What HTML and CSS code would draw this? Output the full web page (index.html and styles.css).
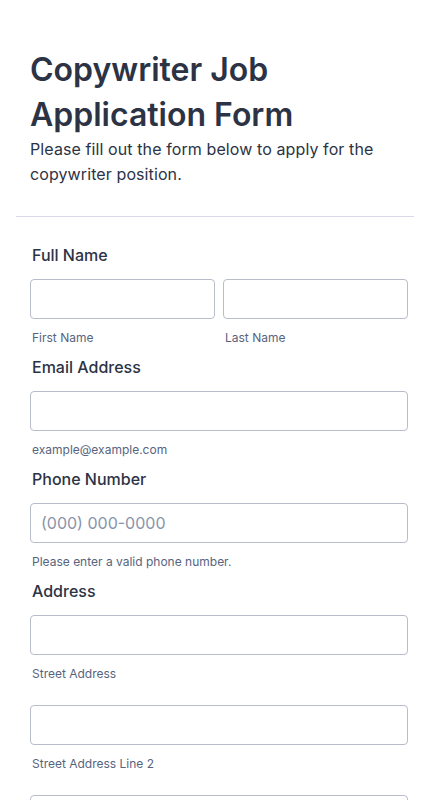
FILE: index.html
```html
<!DOCTYPE html>
<html lang="en">
<head>
  <meta charset="UTF-8" />
  <meta name="viewport" content="width=device-width, initial-scale=1.0" />
  <title>Copywriter Job Application Form</title>
  <link rel="stylesheet" href="styles.css">
</head>
<body>
  <form class="form-all">
    <div class="form-header">
      <h1 class="form-title">Copywriter Job Application Form</h1>
      <p class="form-subtitle">Please fill out the form below to apply for the copywriter position.</p>
    </div>

    <ul class="form-section">
      <li class="form-line">
        <label class="form-label">Full Name</label>
        <div class="name-row">
          <div class="sub-field">
            <input type="text" class="form-input" />
            <span class="sublabel">First Name</span>
          </div>
          <div class="sub-field">
            <input type="text" class="form-input" />
            <span class="sublabel">Last Name</span>
          </div>
        </div>
      </li>

      <li class="form-line">
        <label class="form-label">Email Address</label>
        <input type="email" class="form-input" />
        <span class="sublabel">example@example.com</span>
      </li>

      <li class="form-line">
        <label class="form-label">Phone Number</label>
        <input type="tel" class="form-input" placeholder="(000) 000-0000" />
        <span class="sublabel">Please enter a valid phone number.</span>
      </li>

      <li class="form-line">
        <label class="form-label">Address</label>
        <div class="address-part">
          <input type="text" class="form-input" />
          <span class="sublabel">Street Address</span>
        </div>
        <div class="address-part">
          <input type="text" class="form-input" />
          <span class="sublabel">Street Address Line 2</span>
        </div>
        <div class="address-part">
          <input type="text" class="form-input" />
          <span class="sublabel">City</span>
        </div>
      </li>
    </ul>
  </form>
</body>
</html>
```

FILE: styles.css
```css
body {
  margin: 0;
  background: #fff;
  color: #2c3345;
  font-family: Inter, "Noto Sans", sans-serif;
}
.form-all {
  margin: 0 16px;
}
.form-header {
  padding: 47px 14px 29px;
  border-bottom: 1px solid #d8dae9;
}
.form-title {
  margin: 0;
  font-size: 32px;
  line-height: 45px;
  font-weight: 600;
  color: #2c3345;
}
.form-subtitle {
  margin: 0;
  font-size: 16px;
  line-height: 25px;
  font-weight: 400;
  letter-spacing: 0.1px;
  color: #2c3345;
}
.form-section {
  list-style: none;
  margin: 0;
  padding: 28px 6px 0 14px;
}
.form-line {
  display: flex;
  flex-direction: column;
  margin-bottom: 11px;
}
.form-label {
  display: block;
  margin: 0 0 14px 2px;
  font-size: 16px;
  line-height: 20px;
  font-weight: 500;
  color: #2c3345;
}
.name-row {
  display: grid;
  grid-template-columns: 1fr 1fr;
  gap: 8px;
}
.sub-field {
  display: flex;
  flex-direction: column;
}
.form-input {
  box-sizing: border-box;
  width: 100%;
  height: 40px;
  margin: 0;
  padding: 0 10px;
  border: 1px solid #b8bdc9;
  border-radius: 4px;
  background: #fff;
  font-family: Inter, "Noto Sans", sans-serif;
  font-size: 16px;
  color: #2c3345;
}
.form-input::placeholder {
  color: #8894ab;
}
.sublabel {
  display: block;
  margin: 11px 0 0 2px;
  font-size: 12px;
  line-height: 16px;
  color: #57647e;
}
.address-part {
  display: flex;
  flex-direction: column;
  margin-bottom: 23px;
}
```
